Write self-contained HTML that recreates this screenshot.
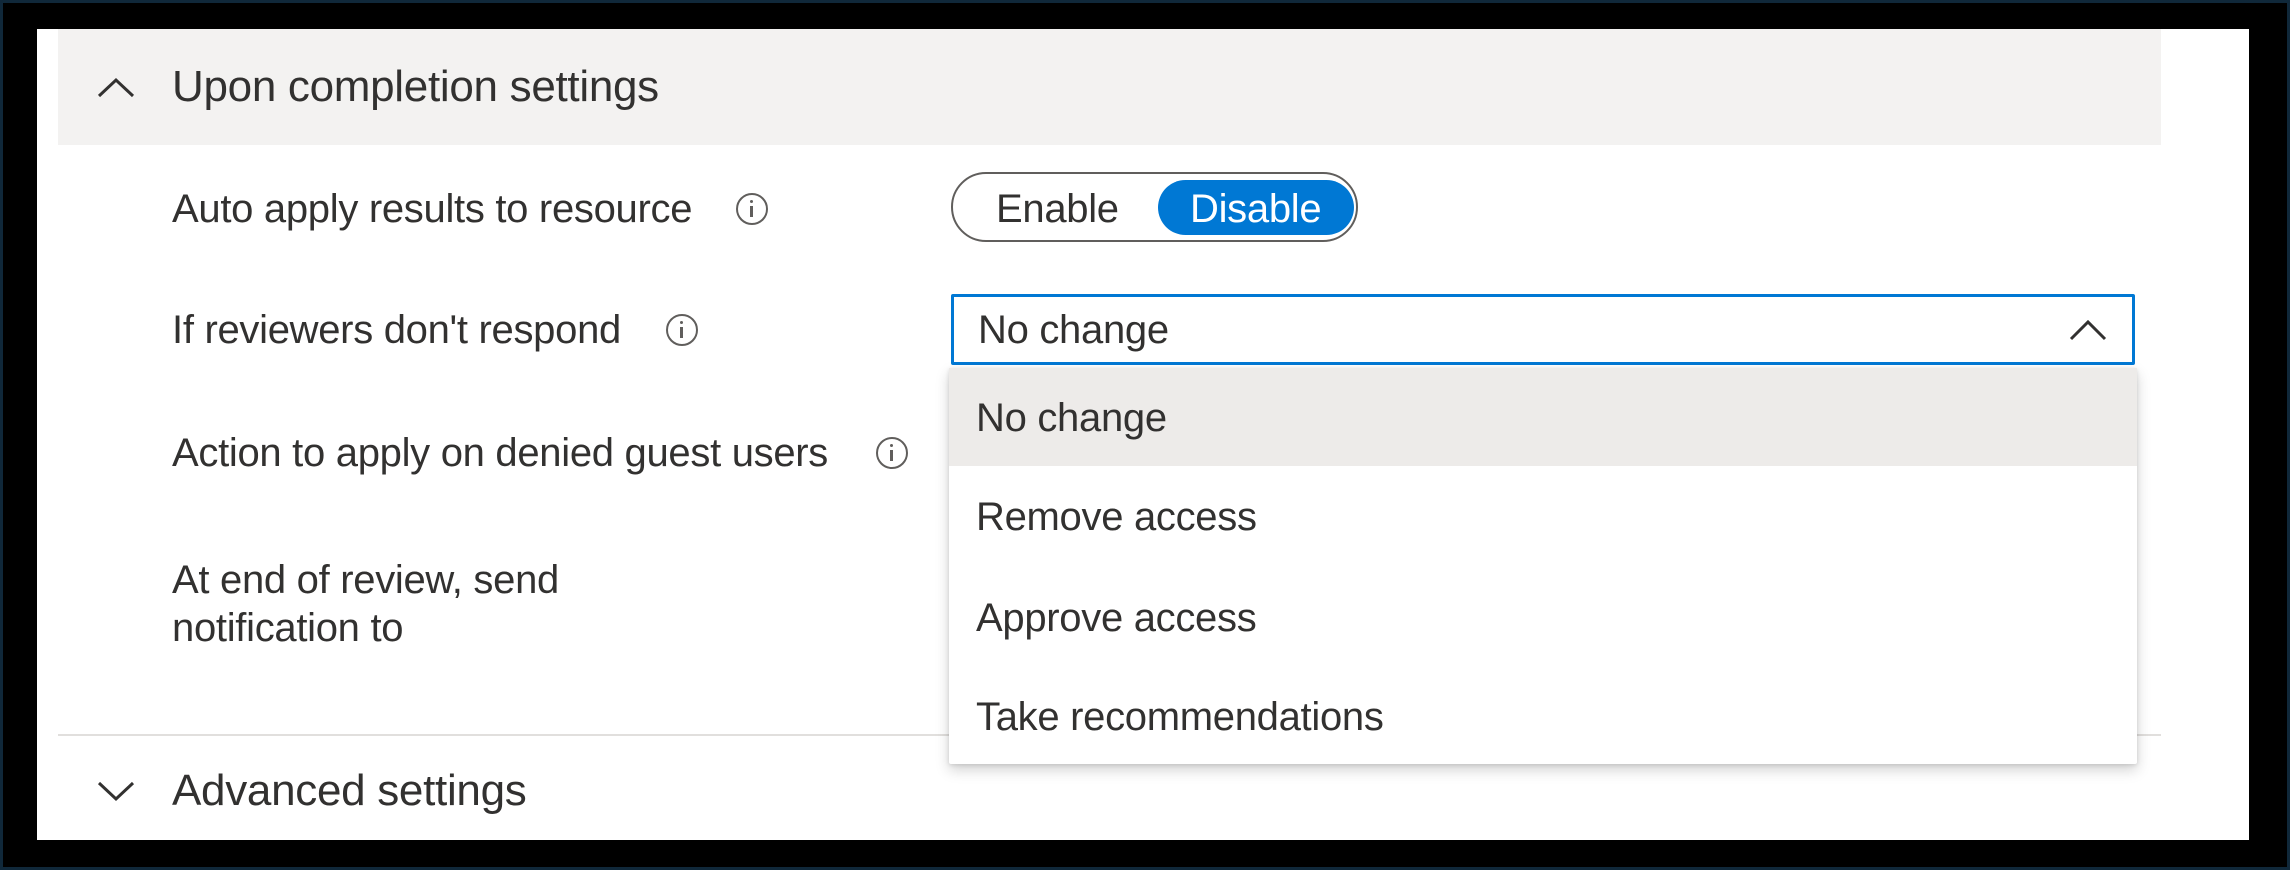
<!DOCTYPE html>
<html><head><meta charset="utf-8"><style>
*{margin:0;padding:0;box-sizing:border-box}
body{width:2290px;height:870px;background:#000;position:relative;overflow:hidden;font-family:"Liberation Sans",sans-serif;color:#323130}
.frame{position:absolute;left:0;top:0;width:2290px;height:870px;border:3px solid #10283a}
.panel{position:absolute;left:37px;top:29px;width:2212px;height:811px;background:#fff}
.t{position:absolute;white-space:nowrap;font-size:40px;line-height:46px;letter-spacing:-0.3px}
.hdr{position:absolute;left:58px;top:29px;width:2103px;height:116px;background:#f3f2f1}
.info{position:absolute;width:32px;height:32px;border:2.5px solid #605e5c;border-radius:50%}
.info:before{content:"";position:absolute;left:12px;top:5px;width:3px;height:3px;background:#605e5c;border-radius:50%}
.info:after{content:"";position:absolute;left:12px;top:11px;width:3px;height:11px;background:#605e5c}
</style></head><body>
<div class="frame"></div>
<div class="panel"></div>
<div class="hdr"></div>
<svg style="position:absolute;left:96px;top:77px" width="40" height="22" viewBox="0 0 40 22"><path d="M3 19 L20 3 L37 19" fill="none" stroke="#323130" stroke-width="3"/></svg>
<div class="t" style="left:172px;top:62px;font-size:44px;line-height:50px">Upon completion settings</div>

<div class="t" style="left:172px;top:186px">Auto apply results to resource</div>
<div class="info" style="left:736px;top:193px"></div>
<div style="position:absolute;left:951px;top:172px;width:407px;height:70px;border:2.5px solid #605e5c;border-radius:35px"></div>
<div class="t" style="left:996px;top:186px">Enable</div>
<div style="position:absolute;left:1158px;top:180px;width:196px;height:55px;background:#0078d4;border-radius:28px"></div>
<div class="t" style="left:1190px;top:186px;color:#fff">Disable</div>

<div class="t" style="left:172px;top:307px">If reviewers don't respond</div>
<div class="info" style="left:666px;top:314px"></div>
<div style="position:absolute;left:951px;top:294px;width:1184px;height:71px;border:3px solid #0078d4;border-radius:2px;background:#fff"></div>
<div class="t" style="left:978px;top:307px">No change</div>
<svg style="position:absolute;left:2068px;top:318px" width="40" height="24" viewBox="0 0 40 24"><path d="M3 21 L20 4 L37 21" fill="none" stroke="#323130" stroke-width="3"/></svg>

<div class="t" style="left:172px;top:430px">Action to apply on denied guest users</div>
<div class="info" style="left:876px;top:437px"></div>

<div class="t" style="left:172px;top:557px">At end of review, send</div>
<div class="t" style="left:172px;top:605px">notification to</div>

<div style="position:absolute;left:58px;top:734px;width:2103px;height:2px;background:#e1dfdd"></div>
<svg style="position:absolute;left:96px;top:780px" width="40" height="22" viewBox="0 0 40 22"><path d="M3 3 L20 19 L37 3" fill="none" stroke="#323130" stroke-width="3"/></svg>
<div class="t" style="left:172px;top:766px;font-size:44px;line-height:50px">Advanced settings</div>

<div style="position:absolute;left:949px;top:368px;width:1188px;height:396px;background:#fff;box-shadow:0 6px 14px rgba(0,0,0,.18),0 1px 4px rgba(0,0,0,.12);border-radius:2px">
<div style="height:98px;background:#edebe9"></div>
</div>
<div class="t" style="left:976px;top:395px">No change</div>
<div class="t" style="left:976px;top:494px">Remove access</div>
<div class="t" style="left:976px;top:595px">Approve access</div>
<div class="t" style="left:976px;top:694px">Take recommendations</div>
</body></html>
